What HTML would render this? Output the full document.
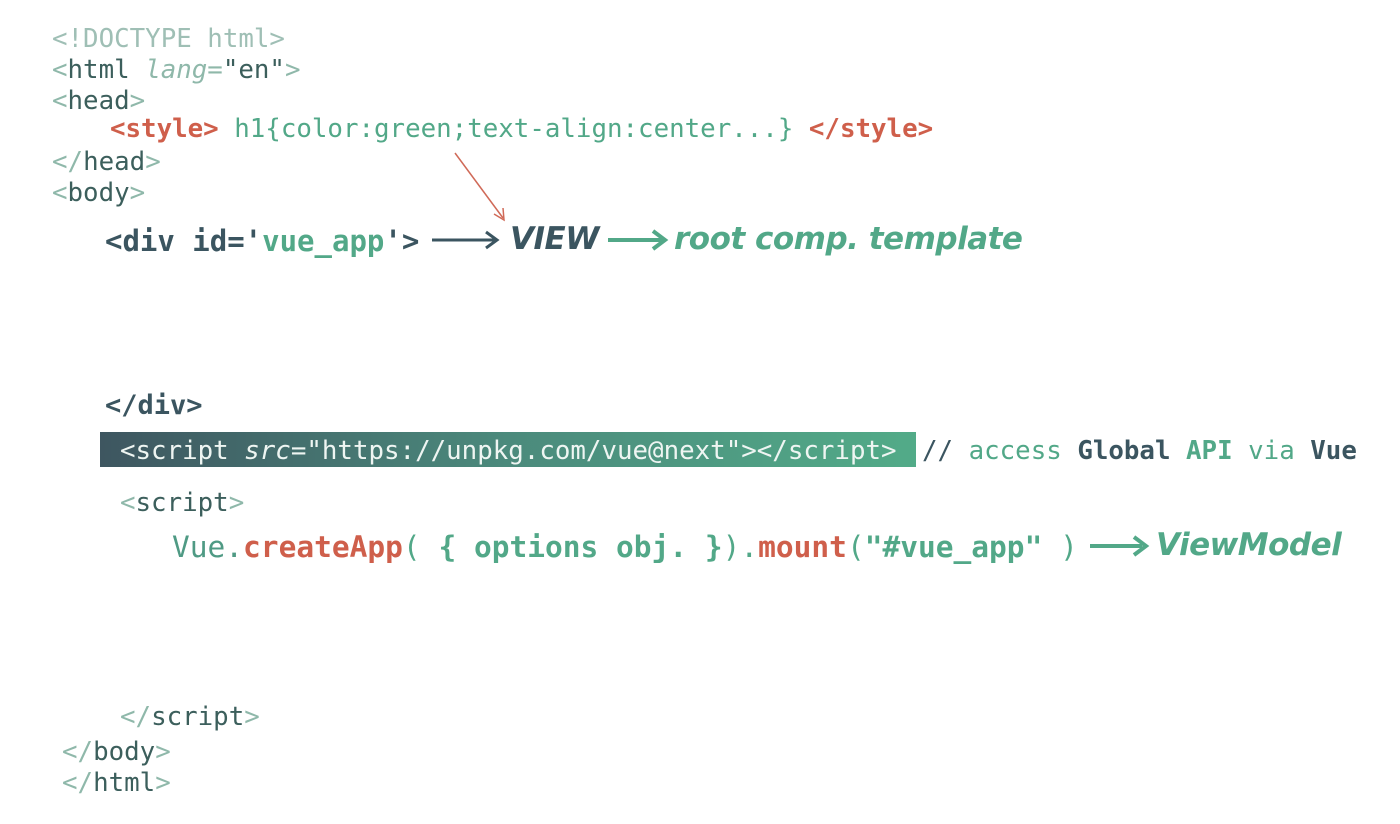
<!DOCTYPE html>
<html><head><style>
body{margin:0;width:1400px;height:824px;background:#fff;position:relative;overflow:hidden;font-family:"DejaVu Sans Mono","Liberation Mono",monospace;}
.l{position:absolute;white-space:pre;line-height:1;}
.g{color:#8fb8aa}.d{color:#3c5f5c}.gr{color:#52a888}.r{color:#cf5f4b}.s{color:#3b5560}
.b{font-weight:bold}
.sans{font-family:"DejaVu Sans","Liberation Sans",sans-serif;font-style:italic;font-weight:bold;letter-spacing:-0.5px}
</style></head><body>
<div class="l" style="left:52px;top:27px;font-size:25.8px;color:#9fbfb5">&lt;!DOCTYPE html&gt;</div>
<div class="l" style="left:52px;top:58px;font-size:25.8px"><span class="g">&lt;</span><span class="d">html </span><span class="g" style="font-style:italic">lang=</span><span class="d">"en"</span><span class="g">&gt;</span></div>
<div class="l" style="left:52px;top:89px;font-size:25.8px"><span class="g">&lt;</span><span class="d">head</span><span class="g">&gt;</span></div>
<div class="l" style="left:110px;top:117px;font-size:25.8px"><span class="r b">&lt;style&gt;</span><span class="gr"> h1{color:green;text-align:center...} </span><span class="r b">&lt;/style&gt;</span></div>
<div class="l" style="left:52px;top:150px;font-size:25.8px"><span class="g">&lt;/</span><span class="d">head</span><span class="g">&gt;</span></div>
<div class="l" style="left:52px;top:181px;font-size:25.8px"><span class="g">&lt;</span><span class="d">body</span><span class="g">&gt;</span></div>
<svg style="position:absolute;left:0;top:0" width="1400" height="824">
<line x1="455" y1="153" x2="503" y2="218" stroke="#d06a58" stroke-width="1.5"/>
<path d="M494 214 L504 220 L503 208" fill="none" stroke="#d06a58" stroke-width="1.5"/>
<line x1="432" y1="240" x2="495" y2="240" stroke="#3b5560" stroke-width="3"/>
<path d="M486 232 L497 240 L486 248" fill="none" stroke="#3b5560" stroke-width="3"/>
<line x1="608" y1="240" x2="662" y2="240" stroke="#52a888" stroke-width="4"/>
<path d="M653 231 L665 240 L653 249" fill="none" stroke="#52a888" stroke-width="4"/>
<line x1="1090" y1="546" x2="1142" y2="546" stroke="#52a888" stroke-width="4"/>
<path d="M1134 537 L1146 546 L1134 555" fill="none" stroke="#52a888" stroke-width="4"/>
</svg>
<div class="l b" style="left:105px;top:227px;font-size:29px"><span class="s">&lt;div id='</span><span class="gr">vue_app</span><span class="s">'&gt;</span></div>
<div class="l sans s" style="left:510px;top:224px;font-size:31px;color:#3b5560">VIEW</div>
<div class="l sans" style="left:674px;top:224px;font-size:31px;color:#52a888">root comp. template</div>
<div class="l b s" style="left:105px;top:392px;font-size:27px">&lt;/div&gt;</div>
<div style="position:absolute;left:100px;top:432px;width:816px;height:35px;background:linear-gradient(90deg,#3e5660,#4b8a7c 50%,#52ab88)"></div>
<div class="l" style="left:120px;top:439px;font-size:25.8px;color:#eef5f2">&lt;script <i>src</i>="https://unpkg.com/vue@next"&gt;&lt;/script&gt;</div>
<div class="l" style="left:922px;top:439px;font-size:25.8px"><span class="s">// </span><span class="gr">access </span><span class="s b">Global </span><span class="gr b">API</span><span class="gr"> via </span><span class="s b">Vue</span></div>
<div class="l" style="left:120px;top:491px;font-size:25.8px"><span class="g">&lt;</span><span class="d">script</span><span class="g">&gt;</span></div>
<div class="l" style="left:172px;top:533px;font-size:29.5px"><span style="color:#4f9a84">Vue.</span><span class="r b">createApp</span><span class="gr">( </span><span class="gr b">{ options obj. }</span><span class="gr">).</span><span class="r b">mount</span><span class="gr">(</span><span class="gr b">"#vue_app"</span><span class="gr"> )</span></div>
<div class="l sans" style="left:1156px;top:530px;font-size:31px;color:#52a888">ViewModel</div>
<div class="l" style="left:120px;top:705px;font-size:25.8px"><span class="g">&lt;/</span><span class="d">script</span><span class="g">&gt;</span></div>
<div class="l" style="left:62px;top:740px;font-size:25.8px"><span class="g">&lt;/</span><span class="d">body</span><span class="g">&gt;</span></div>
<div class="l" style="left:62px;top:771px;font-size:25.8px"><span class="g">&lt;/</span><span class="d">html</span><span class="g">&gt;</span></div>
</body></html>
